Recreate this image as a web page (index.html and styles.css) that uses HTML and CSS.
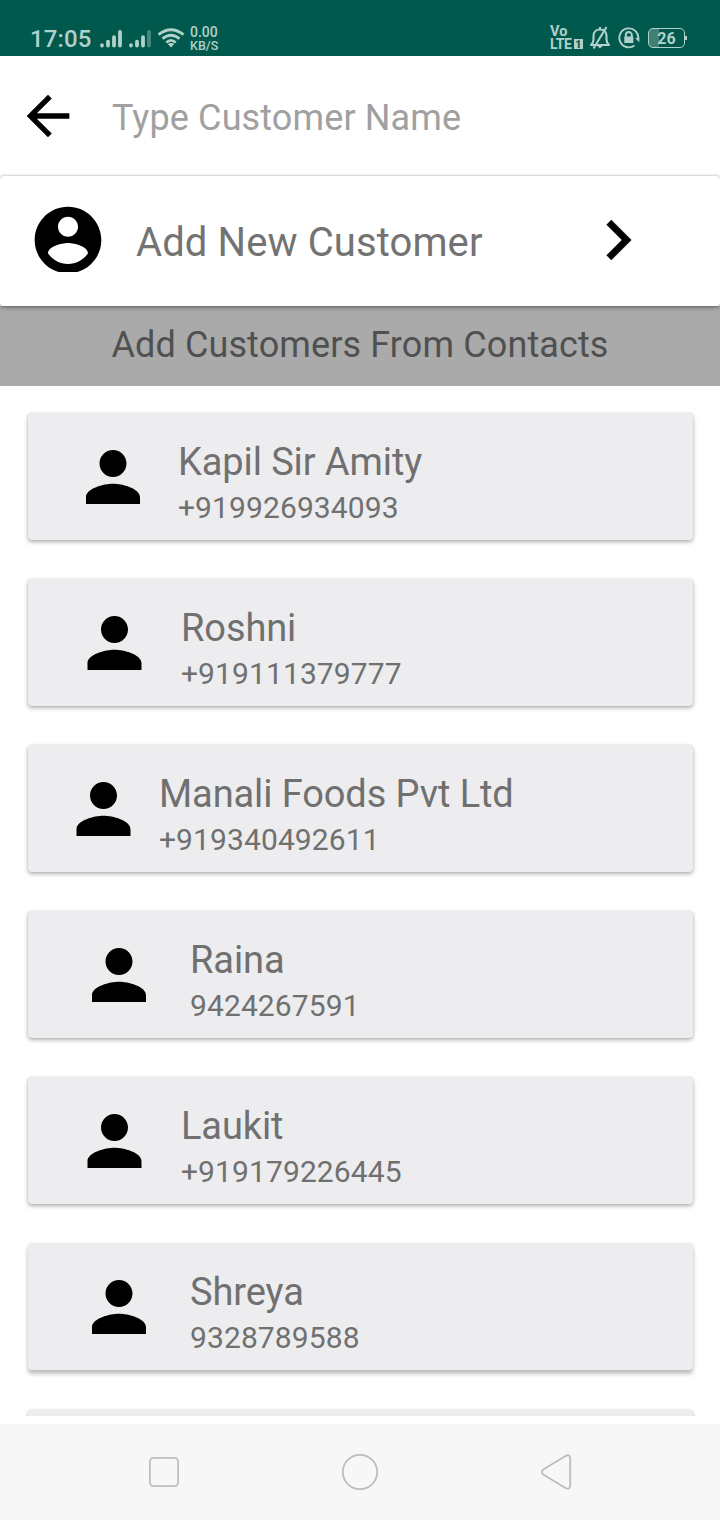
FILE: index.html
```html
<!DOCTYPE html>
<html lang="en">
<head>
<meta charset="utf-8">
<title>Add Customer</title>
<link rel="stylesheet" href="styles.css">
</head>
<body>
<svg width="0" height="0" class="defs"><symbol id="person" viewBox="0 0 24 24"><path d="M12 12c2.21 0 4-1.79 4-4s-1.79-4-4-4-4 1.79-4 4 1.79 4 4 4zm0 2c-2.67 0-8 1.34-8 4v2h16v-2c0-2.66-5.33-4-8-4z"/></symbol></svg>
<div class="screen">
  <header class="status">
    <span class="clock">17:05</span>
    <svg class="signals" width="52" height="20" viewBox="0 0 52 20">
      <g stroke="#b0d0ca" stroke-width="3.8" stroke-linecap="round"><path d="M2 16.2v.4M8 12.6v4M14 8.2v8.4M20 3v13.6M31 16.2v.4M37 12.6v4M43 8.2v8.4"/><path d="M49 3v13.6" opacity=".4"/></g>
    </svg>
    <svg class="wifi" width="28" height="20" viewBox="0 0 28 20">
      <g fill="none" stroke="#b0d0ca" stroke-width="2.8"><path d="M1.5 6.6Q14-3.2 26.5 6.6M5.5 10.7Q14 3.8 22.5 10.7M9.3 14.5Q14 10.3 18.7 14.5"/></g><path d="M10.8 16Q14 13.8 17.2 16L14 19.5z" fill="#b0d0ca"/>
    </svg>
    <span class="speed"><span>0.00</span><span class="unit">KB/S</span></span>
    <span class="spacer"></span>
    <span class="volte"><span class="vo">Vo</span><span class="lte"><span class="lte-text">LTE</span><b>1</b></span></span>
    <svg class="bell" width="20" height="24" viewBox="0 0 20 24">
      <g fill="none" stroke="#b0d0ca" stroke-width="2.1" stroke-linejoin="round"><path d="M1 19h18c-1.9-1.7-2.5-3-2.5-5.5V10C16.5 6 14 3.5 10 3.5S3.5 6 3.5 10v3.5C3.5 16 3 17.3 1 19z"/><path d="M16.5 1 3.5 22.5"/><path d="M10 1v2.5"/></g><path d="M7.5 20h5L10 22.5z" fill="#b0d0ca"/>
    </svg>
    <svg class="lock" width="22" height="22" viewBox="0 0 22 22">
      <g fill="none" stroke="#b0d0ca" stroke-width="1.9"><path d="M16.5 18.5A9.5 9.5 0 1 1 20.3 12"/><path d="M7.8 10V8a3 3 0 0 1 6 0v2"/></g><path d="M6.3 9.5h9V16h-9zM17.3 11h4v4.5z" fill="#b0d0ca"/>
    </svg>
    <span class="battery">26</span><span class="battery-tip"></span>
  </header>

  <div class="search">
    <svg width="64" height="64" viewBox="0 0 24 24"><path d="M20 11H7.83l5.59-5.59L12 4l-8 8 8 8 1.41-1.41L7.83 13H20v-2z"/></svg>
    <span class="hint">Type Customer Name</span>
  </div>

  <div class="new-customer">
    <span class="avatar"><svg width="80" height="80" viewBox="0 0 24 24"><path d="M12 2C6.48 2 2 6.48 2 12s4.48 10 10 10 10-4.48 10-10S17.52 2 12 2zm0 3c1.66 0 3 1.34 3 3s-1.34 3-3 3-3-1.34-3-3 1.34-3 3-3zm0 14.2c-2.5 0-4.71-1.28-6-3.22.03-1.99 4-3.08 6-3.08 1.99 0 5.97 1.09 6 3.08-1.29 1.94-3.5 3.22-6 3.22z"/></svg></span>
    <span class="new-label">Add New Customer</span>
    <svg class="chevron" width="80" height="80" viewBox="0 0 24 24"><path d="M10 6 8.59 7.41 13.17 12l-4.58 4.59L10 18l6-6z" stroke="#000" stroke-width=".12"/></svg>
  </div>
  <div class="section">Add Customers From Contacts</div>

  <main class="contacts">
    <div class="card mid"><svg class="person"><use href="#person"/></svg><div class="info"><span class="name">Kapil Sir Amity</span><span class="phone">+919926934093</span></div></div>
    <div class="card short"><svg class="person"><use href="#person"/></svg><div class="info"><span class="name">Roshni</span><span class="phone">+919111379777</span></div></div>
    <div class="card long"><svg class="person"><use href="#person"/></svg><div class="info"><span class="name">Manali Foods Pvt Ltd</span><span class="phone">+919340492611</span></div></div>
    <div class="card local"><svg class="person"><use href="#person"/></svg><div class="info"><span class="name">Raina</span><span class="phone">9424267591</span></div></div>
    <div class="card short"><svg class="person"><use href="#person"/></svg><div class="info"><span class="name">Laukit</span><span class="phone">+919179226445</span></div></div>
    <div class="card local raised"><svg class="person"><use href="#person"/></svg><div class="info"><span class="name">Shreya</span><span class="phone">9328789588</span></div></div>
    <div class="card"></div>
  </main>

  <nav class="nav">
    <svg width="40" height="40" viewBox="0 0 40 40"><rect x="5.9" y="5.9" width="28.2" height="28.2" rx="3.5"/></svg>
    <svg width="40" height="40" viewBox="0 0 40 40"><circle cx="20" cy="20" r="17.2"/></svg>
    <svg width="40" height="40" viewBox="0 0 40 40"><path d="M7.2 17.6 29.5 4Q33.5 2 34.2 5.5V34Q33.5 38 29.5 36L7.2 22.4Q4.5 20 7.2 17.6z"/></svg>
  </nav>
</div>
</body>
</html>
```
FILE: styles.css
```css
* { box-sizing: border-box; }
body { margin: 0; background: #fff; font-family: Roboto, sans-serif; }
svg { display: block; flex: none; }
.defs { position: absolute; }
.screen { width: 720px; height: 1520px; display: flex; flex-direction: column; overflow: hidden; }

.status { height: 56px; flex: none; background: #00594c; color: #b0d0ca; display: flex; align-items: flex-start; padding: 0 32px 0 30px; white-space: nowrap; }
.clock { width: 70px; margin-top: 25px; font-size: 24px; line-height: 28px; font-weight: 500; letter-spacing: .15px; }
.signals { margin-top: 29px; }
.wifi { margin: 28px 0 0 5px; }
.speed { display: flex; flex-direction: column; margin: 26px 0 0 5px; font-size: 14px; line-height: 13px; font-weight: 500; }
.unit { font-size: 12.5px; }
.spacer { flex: 1; }
.volte { display: flex; flex-direction: column; width: 33px; margin-top: 25px; font-weight: 700; }
.vo { font-size: 14.5px; line-height: 13px; }
.lte { display: flex; font-size: 14px; line-height: 13px; }
.lte-text { width: 24px; letter-spacing: -.3px; }
.lte b { width: 9px; height: 10px; margin-top: 1px; background: #b0d0ca; color: #00594c; font-size: 10px; line-height: 11px; text-align: center; }
.bell { margin: 26px 0 0 7px; }
.lock { margin: 27px 0 0 8px; }
.battery { width: 37px; height: 20px; margin: 28px 0 0 8px; border: 1.5px solid #b0d0ca; border-radius: 5px; background: linear-gradient(90deg, #408075 10px, transparent 10px); font-size: 16px; font-weight: 700; line-height: 19px; text-align: center; }
.battery-tip { width: 2px; height: 4px; margin: 36px 1px 0 0; background: #b0d0ca; }

.search { height: 120px; flex: none; display: flex; align-items: center; padding-left: 16px; }
.hint { margin: 4px 0 0 32px; font-size: 36px; line-height: 42px; letter-spacing: .12px; color: #a0a0a0; }

.new-customer { position: relative; height: 130px; flex: none; display: flex; align-items: center; padding-left: 28px; background: #fff; border-radius: 4px; box-shadow: 0 2px 4px rgba(0,0,0,.28), 0 0 3px rgba(0,0,0,.3); }
.avatar { height: 72px; width: 80px; margin-top: -10px; overflow: hidden; }
.new-label { width: 441.5px; margin: 3px 0 0 28px; font-size: 40px; line-height: 48px; letter-spacing: .1px; color: #737373; }
.chevron { margin-top: -2px; }
.section { height: 80px; flex: none; padding-top: 18px; background: #aaa; color: #505050; font-size: 36px; line-height: 42px; letter-spacing: .12px; text-align: center; }

.contacts { height: 1030px; flex: none; display: flex; flex-direction: column; gap: 39px; padding: 27px 27.5px 0; overflow: hidden; }
.card { height: 127px; flex: none; display: flex; background: #ededef; border-radius: 4px; box-shadow: 0 2px 4px rgba(0,0,0,.3), 0 0 2px rgba(0,0,0,.12); }
.raised { margin-bottom: 1px; box-shadow: 0 4px 4px rgba(0,0,0,.25), 0 0 2px rgba(0,0,0,.1); }
.person { width: 81px; height: 81px; margin-top: 23px; transform: translateY(.6px); }
.info { display: flex; flex-direction: column; padding-top: 26px; color: #707070; }
.name { font-size: 38px; line-height: 46px; letter-spacing: -.1px; }
.phone { font-size: 30px; line-height: 36px; margin-top: 5px; letter-spacing: .1px; }
.mid { padding-left: 44.5px; gap: 25px; }
.short { padding-left: 46px; gap: 26.5px; }
.long { padding-left: 35.5px; gap: 15px; }
.local { padding-left: 50.5px; gap: 31px; }
.mid .person, .local .person { transform: translate(.5px, .6px); }

.nav { height: 96px; margin-top: 8px; flex: none; background: #f7f7f7; display: flex; align-items: center; justify-content: center; gap: 156px; }
.nav svg { fill: none; stroke: #bdbdbd; stroke-width: 1.8; }
```
